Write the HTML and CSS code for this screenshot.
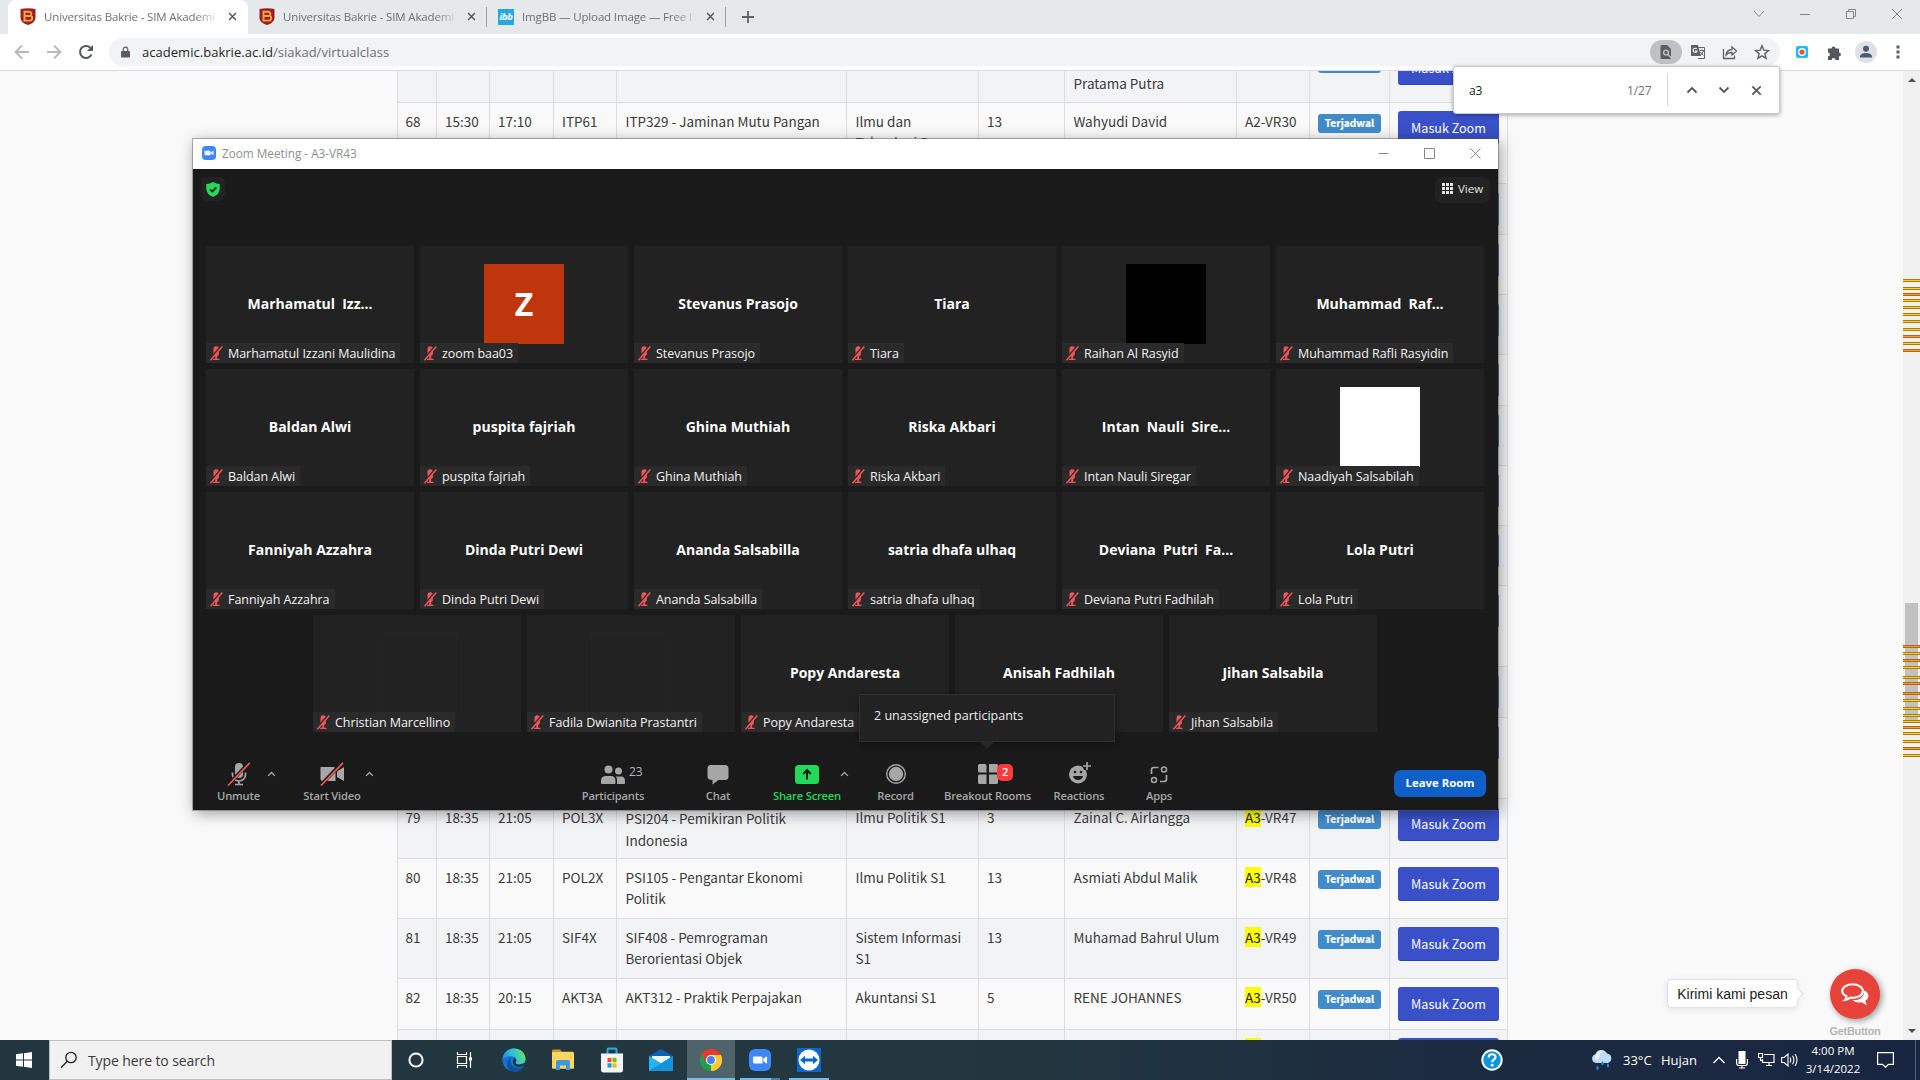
FILE: index.html
```html
<!DOCTYPE html>
<html lang="id">
<head>
<meta charset="utf-8">
<title>Universitas Bakrie - SIM Akademik</title>
<link rel="stylesheet" href="styles.css">
</head>
<body>
<svg class="defs" width="0" height="0" aria-hidden="true">
  <symbol id="crest" viewBox="0 0 16 17"><path d="M.5 1Q8-.6 15.500 1v9q0 4.500-7.500 7Q.5 14.500.5 10z" fill="#9b1f24"/><path d="M4.500 3.700h5a2.200 2.200 0 0 1 .9 4 2.500 2.500 0 0 1-.5 4.900H4.500zM3.500 3.700h3M3.500 12.600h3M5 8h5.500" fill="none" stroke="#f2a93b" stroke-width="1.900"/></symbol>
  <symbol id="close" viewBox="0 0 10 10"><path d="M1.200 1.200l7.600 7.600M8.800 1.200L1.200 8.800" fill="none" stroke="currentColor" stroke-width="1.600"/></symbol>
  <symbol id="thinclose" viewBox="0 0 11 11"><path d="M.5.5l10 10M10.500.5l-10 10" fill="none" stroke="currentColor"/></symbol>
  <symbol id="up" viewBox="0 0 12 8"><path d="M1.500 6.500L6 2l4.500 4.500" fill="none" stroke="currentColor" stroke-width="1.800"/></symbol>
  <symbol id="down" viewBox="0 0 12 8"><path d="M1.500 1.500L6 6l4.500-4.500" fill="none" stroke="currentColor" stroke-width="1.800"/></symbol>
  <symbol id="muted" viewBox="0 0 14 15"><path d="M4.500 3a2.700 2.700 0 0 1 5.400 0v4.500a2.700 2.700 0 0 1-5.400 0zM6.200 9.500h2v3.300h2.300V14H4v-1.200h2.200z" fill="#f0555a"/><path d="M12 .8L.7 13.500" stroke="#2a2a2a" stroke-width="2.200"/><path d="M13.300.6L1.500 14.200" stroke="#f0555a" stroke-width="1.500"/></symbol>
  <symbol id="zoomlogo" viewBox="0 0 22 22"><rect width="22" height="22" rx="6" fill="#4087fc"/><path d="M4 7.500h8q1.500 0 1.500 1.500v5.500h-8Q4 14.500 4 13zM14.300 9.700L18 7.300v7.400l-3.700-2.400z" fill="#fff"/></symbol>
</svg>

<div class="screen">
  <header class="tabs">
    <div class="tab active"><svg class="fav"><use href="#crest"/></svg><span class="title">Universitas Bakrie - SIM Akademi</span><svg class="x"><use href="#close"/></svg></div>
    <div class="tab"><svg class="fav"><use href="#crest"/></svg><span class="title">Universitas Bakrie - SIM Akademi</span><svg class="x"><use href="#close"/></svg></div>
    <div class="tab"><span class="ibb">ibb</span><span class="title">ImgBB — Upload Image — Free I</span><svg class="x"><use href="#close"/></svg></div>
    <svg class="plus" viewBox="0 0 12 12"><path d="M6 0v12M0 6h12" stroke="#5f6368" stroke-width="1.800"/></svg>
    <div class="wincontrols">
      <svg viewBox="0 0 12 12"><path d="M1 3l5 5.500L11 3" fill="none" stroke="#85898c"/></svg>
      <svg viewBox="0 0 12 12"><path d="M1 6.500h10" stroke="#85898c"/></svg>
      <svg viewBox="0 0 12 12"><path d="M1.500 3.500h7v7h-7zM3.500 3.500v-2h7v7h-2" fill="none" stroke="#85898c"/></svg>
      <svg viewBox="0 0 12 12"><path d="M1 1l10 10M11 1L1 11" stroke="#85898c"/></svg>
    </div>
  </header>

  <div class="toolbar">
    <div class="nav">
      <svg viewBox="0 0 16 16"><path d="M15 8H2M8 1.500L1.500 8 8 14.500" fill="none" stroke="#b6b8ba" stroke-width="1.800"/></svg>
      <svg viewBox="0 0 16 16"><path d="M1 8h13M8 1.500L14.500 8 8 14.500" fill="none" stroke="#b6b8ba" stroke-width="1.800"/></svg>
      <svg viewBox="0 0 16 16"><path d="M13.500 10.500A6 6 0 1 1 12.300 3.700L14 5.500" fill="none" stroke="#54585c" stroke-width="2"/><path d="M15 1v6H9z" fill="#54585c"/></svg>
    </div>
    <div class="omnibox">
      <svg class="lock" viewBox="0 0 10 12"><path d="M1 4.800h8q1 0 1 1V11q0 1-1 1H1q-1 0-1-1V5.800q0-1 1-1z" fill="#5a5e63"/><path d="M2.500 5V3a2.500 2.400 0 0 1 5 0v2" fill="none" stroke="#5a5e63" stroke-width="1.300"/></svg>
      <span class="url"><b>academic.bakrie.ac.id</b>/siakad/virtualclass</span>
      <div class="omni-icons">
        <span class="pill"><svg viewBox="0 0 16 16"><path d="M4 1h5l4 4v9q0 1-1 1H4q-1.500 0-1.500-1.500v-11Q2.500 1 4 1z" fill="#5a5d61"/><circle cx="8" cy="8.500" r="2.400" fill="none" stroke="#c0c1c4" stroke-width="1.400"/><path d="M9.600 10.200l3.600 3.600" stroke="#c0c1c4" stroke-width="1.400"/></svg></span>
        <svg viewBox="0 0 16 16"><path d="M1 1h7l3 11H1z" fill="#5f6368"/><path d="M8.700 3.500h5.800v11H8M10 6.500h4M12 5.500v1M13.500 7q-1 3-3.500 4.500M10.500 8l3 3.500" fill="none" stroke="#5f6368"/><path d="M6.700 5A2 2 0 1 0 7 7H5" fill="none" stroke="#f1f3f4" stroke-width="1.100"/></svg>
        <svg viewBox="0 0 16 16"><path d="M1.500 5v9.500h11v-3M4 11q.5-5 6-5.500V3l4.500 4-4.500 4V8.500Q6 8.500 4 11z" fill="none" stroke="#5f6368" stroke-width="1.300"/></svg>
        <svg viewBox="0 0 16 16"><path d="M8 1.700l1.800 4.400 4.700.4-3.600 3.100 1.100 4.600L8 11.800l-4 2.400 1.100-4.600L1.500 6.500l4.700-.4z" fill="none" stroke="#5f6368" stroke-width="1.400"/></svg>
      </div>
    </div>
    <div class="ext">
      <svg width="12" height="12" viewBox="0 0 12 12"><rect width="12" height="12" rx="2" fill="#18bdfb"/><circle cx="6" cy="6" r="3.900" fill="#fff"/><circle cx="6" cy="6" r="2.600" fill="#f4512c"/></svg>
      <svg width="15" height="15" viewBox="0 0 15 15"><path d="M1 3.500h3.500a2 2 0 1 1 4 0H12v4a1.900 1.900 0 1 1 0 3.800V15H8.400a1.900 1.900 0 0 0-3.800 0H1v-3.700a1.900 1.900 0 0 0 0-3.800z" fill="#54585c"/></svg>
      <svg width="22" height="22" viewBox="0 0 22 22"><circle cx="11" cy="11" r="11" fill="#dee1e6"/><circle cx="11" cy="7.800" r="3" fill="#4d5b73"/><path d="M5 16.500v-1.500q1-3 6-3t6 3v1.500z" fill="#4d5b73"/></svg>
      <svg width="4" height="14" viewBox="0 0 4 14"><path d="M.5.500h3v3h-3zM.5 5.500h3v3h-3zM.5 10.500h3v3h-3z" fill="#5a5e63"/></svg>
    </div>
  </div>

  <main class="page">
    <div class="content">
      <table class="classes">
        <colgroup><col class="c-no"><col class="c-start"><col class="c-end"><col class="c-code"><col class="c-course"><col class="c-prog"><col class="c-count"><col class="c-lect"><col class="c-room"><col class="c-stat"><col class="c-act"></colgroup>
        <tbody>
        <tr class="h60"><td></td><td></td><td></td><td></td><td></td><td></td><td></td><td class="low"><br>Pratama Putra</td><td></td><td><span class="badge">Terjadwal</span></td><td><a class="btn">Masuk Zoom</a></td></tr>
        <tr class="h81"><td>68</td><td>15:30</td><td>17:10</td><td>ITP61</td><td>ITP329 - Jaminan Mutu Pangan</td><td>Ilmu dan<br>Teknologi Pangan<br>S1</td><td>13</td><td>Wahyudi David</td><td>A2-VR30</td><td><span class="badge">Terjadwal</span></td><td><a class="btn">Masuk Zoom</a></td></tr>
        <tr class="h51"><td colspan="10"></td><td><a class="btn">Masuk Zoom</a></td></tr>
        <tr class="h60"><td colspan="10"></td><td><a class="btn">Masuk Zoom</a></td></tr>
        <tr class="h60"><td colspan="10"></td><td><a class="btn">Masuk Zoom</a></td></tr>
        <tr class="h51"><td colspan="10"></td><td><a class="btn">Masuk Zoom</a></td></tr>
        <tr class="h60"><td colspan="10"></td><td><a class="btn">Masuk Zoom</a></td></tr>
        <tr class="h60"><td colspan="10"></td><td><a class="btn">Masuk Zoom</a></td></tr>
        <tr class="h60"><td colspan="10"></td><td><a class="btn">Masuk Zoom</a></td></tr>
        <tr class="h81"><td colspan="10"></td><td><a class="btn">Masuk Zoom</a></td></tr>
        <tr class="h51"><td colspan="10"></td><td><a class="btn">Masuk Zoom</a></td></tr>
        <tr class="h81"><td colspan="10"></td><td><a class="btn">Masuk Zoom</a></td></tr>
        <tr class="h60"><td>79</td><td>18:35</td><td>21:05</td><td>POL3X</td><td class="loose">PSI204 - Pemikiran Politik<br>Indonesia</td><td>Ilmu Politik S1</td><td>3</td><td>Zainal C. Airlangga</td><td><mark>A3</mark>-VR47</td><td><span class="badge">Terjadwal</span></td><td><a class="btn">Masuk Zoom</a></td></tr>
        <tr class="h60"><td>80</td><td>18:35</td><td>21:05</td><td>POL2X</td><td>PSI105 - Pengantar Ekonomi<br>Politik</td><td>Ilmu Politik S1</td><td>13</td><td>Asmiati Abdul Malik</td><td><mark>A3</mark>-VR48</td><td><span class="badge">Terjadwal</span></td><td><a class="btn">Masuk Zoom</a></td></tr>
        <tr class="h60"><td>81</td><td>18:35</td><td>21:05</td><td>SIF4X</td><td>SIF408 - Pemrograman<br>Berorientasi Objek</td><td>Sistem Informasi<br>S1</td><td>13</td><td>Muhamad Bahrul Ulum</td><td><mark>A3</mark>-VR49</td><td><span class="badge">Terjadwal</span></td><td><a class="btn">Masuk Zoom</a></td></tr>
        <tr class="h51"><td>82</td><td>18:35</td><td>20:15</td><td>AKT3A</td><td>AKT312 - Praktik Perpajakan</td><td>Akuntansi S1</td><td>5</td><td>RENE JOHANNES</td><td><mark>A3</mark>-VR50</td><td><span class="badge">Terjadwal</span></td><td><a class="btn">Masuk Zoom</a></td></tr>
        <tr class="h51"><td></td><td></td><td></td><td></td><td></td><td></td><td></td><td></td><td><mark>A3</mark></td><td></td><td><a class="btn">Masuk Zoom</a></td></tr>
        </tbody>
      </table>
    </div>
    <div class="scrollbar">
      <svg viewBox="0 0 10 5"><path d="M0 5l5-5 5 5z" fill="#505050"/></svg>
      <div class="thumb"></div>
      <svg viewBox="0 0 10 5"><path d="M0 0l5 5 5-5z" fill="#505050"/></svg>
      <i style="top:208px"></i><i style="top:216px"></i><i class="o" style="top:222px"></i><i style="top:228px"></i><i style="top:235px"></i><i style="top:242px"></i><i style="top:249px"></i><i style="top:257px"></i><i class="o" style="top:264px"></i><i style="top:271px"></i><i class="o" style="top:278px"></i>
      <i class="o" style="top:574px"></i><i style="top:581px"></i><i class="o" style="top:588px"></i><i style="top:595px"></i><i style="top:605px"></i><i class="o" style="top:611px"></i><i class="o" style="top:621px"></i><i style="top:628px"></i><i style="top:636px"></i><i style="top:643px"></i><i style="top:649px"></i><i class="o" style="top:655px"></i><i style="top:661px"></i><i style="top:669px"></i><i class="o" style="top:676px"></i><i style="top:683px"></i>
    </div>
    <div class="chatwidget">
      <span class="bubble">Kirimi kami pesan</span>
      <div class="fabcol">
        <span class="fab"><svg viewBox="0 0 28 23"><path d="M23.500 7.200Q28 10 27.300 14q-.6 2.500-3 4 .4 2.500 2 3.900-3.300-.2-5.300-2.600-6 1-9.500-2.100 11.500.3 12-10z" fill="#fff"/><path d="M11.500 1.300c6 0 10.400 3 10.400 6.800s-4.400 6.800-10.400 6.800l-2.500-.2q-2.300 2-5 2.200 1.600-1.500 1.500-3.700Q1.200 11.200 1.200 8.100c0-3.800 4.400-6.800 10.300-6.800z" fill="#e8433a" stroke="#fff" stroke-width="2.100"/></svg></span>
        <span class="gb">GetButton</span>
      </div>
    </div>
  </main>

  <footer class="taskbar">
    <div class="start"><svg width="16" height="16" viewBox="0 0 16 16"><path d="M0 2.300L7 1.300v6.300H0zM8 1.200L16 0v7.600H8zM0 8.500h7v6.300l-7-1zM8 8.500h8V16l-8-1.200z" fill="#fff"/></svg></div>
    <div class="search"><svg width="18" height="18" viewBox="0 0 18 18"><circle cx="11" cy="6.500" r="5.200" fill="none" stroke="#222" stroke-width="1.300"/><path d="M7.300 10.300L1 16.700" stroke="#222" stroke-width="1.300"/></svg><span>Type here to search</span></div>
    <div class="apps">
      <span><svg width="18" height="18" viewBox="0 0 18 18"><circle cx="9" cy="9" r="6.600" fill="none" stroke="#fff" stroke-width="2"/></svg></span>
      <span><svg width="18" height="18" viewBox="0 0 18 18"><path d="M1.500 5.500h9v7h-9zM1.500 1v2.500h9V1M1.500 17v-2.500h9V17M14.500 1v16" fill="none" stroke="#fff" stroke-width="1.200"/><path d="M13 6.500h3v3h-3z" fill="#fff"/></svg></span>
      <span><svg width="24" height="24" viewBox="0 0 24 24"><defs><linearGradient id="eg" x1="0" x2="1" y1=".6" y2=".3"><stop stop-color="#1c8fd8"/><stop offset=".5" stop-color="#2fc1d8"/><stop offset="1" stop-color="#6be457"/></linearGradient></defs><circle cx="12" cy="12" r="11.500" fill="#1474cf"/><path d="M.6 11C1.200 4.500 6 .5 12 .5c7 0 11.500 5 11.500 10 0 4-3 6-6.500 6-2.500 0-3.600-1-3.200-2 1.600-2 .4-6.300-4-6.300C5.600 8.200 2 9.400.6 11z" fill="url(#eg)"/><path d="M9 23C4 20 3.500 13 9 9.500 7.200 13 9 19.500 15 20q4 .3 7-2.500Q18 24 9 23z" fill="#0f4f9b"/><path d="M13.800 14.500c-.4 1 .7 2 3.200 2q3 0 5-1.400l2-.1v3l-2.500-.5q-2 1.500-4.500 1.500-5.500 0-6-4.900-.2-2.500 1.700-4.500 2.100 2 1.100 4.900z" fill="#21363f"/></svg></span>
      <span><svg width="22" height="22" viewBox="0 0 22 20" preserveAspectRatio="none"><path d="M0 2q0-1.500 1.500-1.500H8l2 2H0z" fill="#d99a1b"/><path d="M0 2.500h20.500q1.500 0 1.500 1.500v13q0 1-1 1H1q-1 0-1-1z" fill="#fcd462"/><path d="M4 18v-6q0-2 2-2h10q2 0 2 2v7h-4v-4H8v4H4z" fill="#3f97dc"/></svg></span>
      <span><svg width="24" height="26" viewBox="0 0 24 24" preserveAspectRatio="none"><path d="M7.500 7V2.500q0-1 1-1h7q1 0 1 1V7" fill="none" stroke="#29a8e8" stroke-width="2"/><path d="M1 6h22v15q0 2.500-2.500 2.500h-17Q1 23.500 1 21z" fill="#f4f4f4"/><path fill="#f25022" d="M7.500 10h4v4h-4z"/><path fill="#7fba00" d="M12.500 10h4v4h-4z"/><path fill="#00a4ef" d="M7.500 15h4v4h-4z"/><path fill="#ffb900" d="M12.500 15h4v4h-4z"/></svg></span>
      <span><svg width="24" height="22" viewBox="0 0 24 22"><path d="M0 7L12 0l12 7v6H0z" fill="#0b62b5"/><path d="M3 7h18v8H3z" fill="#f4f4f4"/><path d="M0 7l12 7L24 7v15H0z" fill="#28b3ee"/><path d="M0 22L24 7v15z" fill="#1592dc"/><path d="M3 7h18l-9 7z" fill="#f4f4f4"/></svg></span>
      <span class="run current"><svg width="22" height="22" viewBox="0 0 24 24"><path d="M12 12L1.600 6A12 12 0 0 1 22.400 6z" fill="#e33b2e"/><path d="M12 12v12A12 12 0 0 1 1.600 6z" fill="#1fa04b"/><path d="M12 12L22.400 6A12 12 0 0 1 12 24z" fill="#fccb2f"/><path d="M12 6.500h10.700A12 12 0 0 0 1.600 6l5.600 9z" fill="#e33b2e"/><path d="M16.800 14.700L12 24A12 12 0 0 0 22.700 6.500H12z" fill="#fccb2f"/><circle cx="12" cy="12" r="5.500" fill="#fff"/><circle cx="12" cy="12" r="4.300" fill="#4384f3"/></svg></span>
      <span class="run multi"><svg width="22" height="22" viewBox="0 0 22 22"><use href="#zoomlogo"/></svg></span>
      <span class="run"><svg width="24" height="24" viewBox="0 0 24 24"><path fill="#0c68d0" d="M0 0h24v24H0z"/><circle cx="12" cy="12" r="10.500" fill="#fff"/><path d="M3 12l5-4.200v2.800h8V7.800l5 4.200-5 4.200v-2.800H8v2.800z" fill="#0c68c8"/></svg></span>
    </div>
    <svg class="help" width="22" height="22" viewBox="0 0 22 22"><circle cx="11" cy="11" r="9.700" fill="#0d95dd" stroke="#fff" stroke-width="2"/><path d="M7.700 8.500q0-3.200 3.400-3.200t3.400 2.800q0 1.500-1.700 2.500-1.600 1-1.600 2.600" fill="none" stroke="#fff" stroke-width="2.100"/><circle cx="11.200" cy="16.200" r="1.400" fill="#fff"/></svg>
    <div class="tray">
      <svg class="weather" width="22" height="22" viewBox="0 0 22 22"><path d="M5 14a4.500 4.500 0 0 1-.6-8.800A6.300 6.300 0 0 1 16 4.500a4.900 4.900 0 0 1 1 9.500z" fill="#bcdcf4"/><path d="M5 11a4 4 0 0 1 .5-6A6 6 0 0 1 13 2q-5 2-5 8z" fill="#e5f2fc"/><path d="M6.500 16.500q2.500 3.500 0 4.500-2.500-1 0-4.500zM11.500 12q2.500 3.500 0 4.500-2.500-1 0-4.500zM17 14q2.500 3.500 0 4.500-2.500-1 0-4.500z" fill="#2388e0"/></svg>
      <span class="temp">33°C</span><span class="rain">Hujan</span>
      <svg class="tchev" width="12" height="8" viewBox="0 0 12 8"><path d="M.5 7L6 1.500 11.500 7" fill="none" stroke="#fff" stroke-width="1.300"/></svg>
      <svg class="tmic" width="12" height="18" viewBox="0 0 12 18"><path d="M2.500 0h7v13h-7z" fill="#fff"/><path d="M.6 8v4q0 2.500 2.500 2.500h5.800q2.500 0 2.500-2.500V8M6 14.500V17M3 17h6" fill="none" stroke="#fff" stroke-width="1.200"/></svg>
      <svg class="tnet" width="17" height="14" viewBox="0 0 17 14"><path d="M6 1.500h10v8H4.500V6M8 12.500h6M11 9.500v3M.5.500h4v4h-4zM2.500 4.500v3h2" fill="none" stroke="#fff" stroke-width="1.200"/></svg>
      <svg class="tvol" width="17" height="14" viewBox="0 0 17 14"><path d="M.6 4.500h2.500L7 1v12L3.100 9.500H.6zM9 4.500q1.500 2.500 0 5M11.500 2.700q2.800 4.300 0 8.600M14 1q4 6 0 12" fill="none" stroke="#fff" stroke-width="1.100"/></svg>
      <div class="clock"><span>4:00 PM</span><span>3/14/2022</span></div>
      <svg class="tnote" width="17" height="16" viewBox="0 0 17 16"><path d="M.6.600h15.800v11.800h-4.900L8.500 15.300 5.500 12.400H.6z" fill="none" stroke="#fff" stroke-width="1.200"/></svg>
    </div>
  </footer>

  <section class="zoomwin">
    <div class="ztitle"><svg width="14" height="14"><use href="#zoomlogo"/></svg><span>Zoom Meeting - A3-VR43</span>
      <div class="zctl"><svg viewBox="0 0 11 11"><path d="M.5 5.500h10" stroke="#888"/></svg><svg viewBox="0 0 11 11"><path d="M.5.5h10v10H.5z" fill="none" stroke="#888"/></svg><svg viewBox="0 0 11 11" color="#888"><use href="#thinclose"/></svg></div>
    </div>
    <div class="zhead">
      <span class="shield"><svg width="14" height="15" viewBox="0 0 14 15"><path d="M7 0q3 2 6.700 2v5q0 5-6.700 8Q.3 12 .3 7V2Q4 2 7 0z" fill="#23d959"/><path d="M4 7.300l2.300 2.300L10.300 5.300" fill="none" stroke="#1a1a1a" stroke-width="1.700"/></svg></span>
      <span class="view"><svg width="11" height="11" viewBox="0 0 11 11"><path d="M0 0h3v3H0zM4 0h3v3H4zM8 0h3v3H8zM0 4h3v3H0zM4 4h3v3H4zM8 4h3v3H8zM0 8h3v3H0zM4 8h3v3H4zM8 8h3v3H8z" fill="#e4e4e4"/></svg>View</span>
    </div>
    <div class="gallery">
      <div class="grow">
        <div class="tile"><b>Marhamatul&nbsp; Izz...</b><span class="nm"><svg><use href="#muted"/></svg>Marhamatul Izzani Maulidina</span></div>
        <div class="tile"><div class="ava z">Z</div><span class="nm"><svg><use href="#muted"/></svg>zoom baa03</span></div>
        <div class="tile"><b>Stevanus Prasojo</b><span class="nm"><svg><use href="#muted"/></svg>Stevanus Prasojo</span></div>
        <div class="tile"><b>Tiara</b><span class="nm"><svg><use href="#muted"/></svg>Tiara</span></div>
        <div class="tile"><div class="ava black"></div><span class="nm"><svg><use href="#muted"/></svg>Raihan Al Rasyid</span></div>
        <div class="tile"><b>Muhammad&nbsp; Raf...</b><span class="nm"><svg><use href="#muted"/></svg>Muhammad Rafli Rasyidin</span></div>
      </div>
      <div class="grow">
        <div class="tile"><b>Baldan Alwi</b><span class="nm"><svg><use href="#muted"/></svg>Baldan Alwi</span></div>
        <div class="tile"><b>puspita fajriah</b><span class="nm"><svg><use href="#muted"/></svg>puspita fajriah</span></div>
        <div class="tile"><b>Ghina Muthiah</b><span class="nm"><svg><use href="#muted"/></svg>Ghina Muthiah</span></div>
        <div class="tile"><b>Riska Akbari</b><span class="nm"><svg><use href="#muted"/></svg>Riska Akbari</span></div>
        <div class="tile"><b>Intan&nbsp; Nauli&nbsp; Sire...</b><span class="nm"><svg><use href="#muted"/></svg>Intan Nauli Siregar</span></div>
        <div class="tile"><div class="ava white"></div><span class="nm"><svg><use href="#muted"/></svg>Naadiyah Salsabilah</span></div>
      </div>
      <div class="grow">
        <div class="tile"><b>Fanniyah Azzahra</b><span class="nm"><svg><use href="#muted"/></svg>Fanniyah Azzahra</span></div>
        <div class="tile"><b>Dinda Putri Dewi</b><span class="nm"><svg><use href="#muted"/></svg>Dinda Putri Dewi</span></div>
        <div class="tile"><b>Ananda Salsabilla</b><span class="nm"><svg><use href="#muted"/></svg>Ananda Salsabilla</span></div>
        <div class="tile"><b>satria dhafa ulhaq</b><span class="nm"><svg><use href="#muted"/></svg>satria dhafa ulhaq</span></div>
        <div class="tile"><b>Deviana&nbsp; Putri&nbsp; Fa...</b><span class="nm"><svg><use href="#muted"/></svg>Deviana Putri Fadhilah</span></div>
        <div class="tile"><b>Lola Putri</b><span class="nm"><svg><use href="#muted"/></svg>Lola Putri</span></div>
      </div>
      <div class="grow">
        <div class="tile"><div class="ava dark"></div><span class="nm"><svg><use href="#muted"/></svg>Christian Marcellino</span></div>
        <div class="tile"><div class="ava dark"></div><span class="nm"><svg><use href="#muted"/></svg>Fadila Dwianita Prastantri</span></div>
        <div class="tile"><b>Popy Andaresta</b><span class="nm"><svg><use href="#muted"/></svg>Popy Andaresta</span></div>
        <div class="tile"><b>Anisah Fadhilah</b></div>
        <div class="tile"><b>Jihan Salsabila</b><span class="nm"><svg><use href="#muted"/></svg>Jihan Salsabila</span></div>
      </div>
    </div>
    <div class="ztools">
      <div class="tool t-mute"><svg width="24" height="24" viewBox="0 0 24 24"><path d="M8 5a4 4 0 0 1 8 0v7a4 4 0 0 1-8 0z" fill="#a6a6a6"/><path d="M5.500 10.500v2a6.500 6.500 0 0 0 13 0v-2M12 19v3.500M8 22.500h8" fill="none" stroke="#a6a6a6" stroke-width="1.700"/><path d="M22 .8L.8 23.200" stroke="#1a1a1a" stroke-width="3.500"/><path d="M22.800.8L1 23.500" stroke="#fa5155" stroke-width="1.700"/></svg><span>Unmute</span></div>
      <svg class="chev c1"><use href="#up"/></svg>
      <div class="tool t-video"><svg width="26" height="24" viewBox="0 0 26 24"><path d="M2 5h12.500q2 0 2 2v12H4q-2.500 0-2.500-2.500V5zM18 9.500L25 5v14l-7-4z" fill="#a6a6a6"/><path d="M23 .8L1.800 23.200" stroke="#1a1a1a" stroke-width="3.500"/><path d="M24 .8L2 23.500" stroke="#fa5155" stroke-width="1.700"/></svg><span>Start Video</span></div>
      <svg class="chev c2"><use href="#up"/></svg>
      <div class="tool t-part"><svg width="24" height="24" viewBox="0 0 24 24"><circle cx="7.500" cy="7.500" r="4" fill="#a6a6a6"/><circle cx="17.500" cy="9" r="3.500" fill="#a6a6a6"/><path d="M0 21v-2q0-5 5-5h5q4.500 0 4.500 5v2q0 1-1 1H1q-1 0-1-1zM16 22v-4q0-2-1-3.500h5q4 0 4 4.500v2q0 1-1 1z" fill="#a6a6a6"/></svg><em>23</em><span>Participants</span></div>
      <div class="tool t-chat"><svg width="22" height="24" viewBox="0 0 22 24"><path d="M4 3h14q3.500 0 3.500 3.500v8q0 3.500-3.500 3.500h-6.500l-6 4.500V18Q.5 18 .5 14.500v-8Q.5 3 4 3z" fill="#a6a6a6"/></svg><span>Chat</span></div>
      <div class="tool t-share"><svg width="24" height="24" viewBox="0 0 24 24"><rect y="3" width="24" height="19" rx="3.500" fill="#23d959"/><path d="M12 17.500V8.500M8.300 12L12 8l3.700 4" fill="none" stroke="#1a1a1a" stroke-width="2"/></svg><span>Share Screen</span></div>
      <svg class="chev c3"><use href="#up"/></svg>
      <div class="tool t-rec"><svg width="22" height="24" viewBox="0 0 22 24"><circle cx="11" cy="12" r="9.300" fill="none" stroke="#a6a6a6" stroke-width="1.400"/><circle cx="11" cy="12" r="7.200" fill="#a6a6a6"/></svg><span>Record</span></div>
      <div class="tool t-break"><svg width="22" height="24" viewBox="0 0 22 24"><path d="M2.500 2H8q1.500 0 1.500 1.500v7h-7Q1 10.500 1 9V3.500Q1 2 2.500 2zM12 2h7.500Q21 2 21 3.500V9q0 1.500-1.500 1.500H12zM1 14q0-1.500 1.500-1.500h7V22h-7Q1 22 1 20.500zM12 12.500h7.500Q21 12.500 21 14v6.500q0 1.500-1.500 1.500H12z" fill="#a6a6a6"/></svg><i>2</i><span>Breakout Rooms</span></div>
      <div class="tool t-react"><svg width="24" height="24" viewBox="0 0 24 24"><circle cx="11" cy="12.500" r="9" fill="#a6a6a6"/><circle cx="20" cy="4" r="4.500" fill="#1a1a1a"/><path d="M20 0v8M16 4h8" stroke="#a6a6a6" stroke-width="1.700"/><path d="M6 14h10q-.8 4-5 4t-5-4z" fill="#1a1a1a"/><circle cx="8" cy="10" r="1.300" fill="#1a1a1a"/><circle cx="14" cy="10" r="1.300" fill="#1a1a1a"/></svg><span>Reactions</span></div>
      <div class="tool t-apps"><svg width="20" height="24" viewBox="0 0 20 24"><path d="M2.500 12V8q0-2.500 2.500-2.500h4.500M17.500 13v4q0 2.500-2.500 2.500h-4" fill="none" stroke="#a6a6a6" stroke-width="1.700"/><circle cx="15" cy="7.500" r="2.500" fill="none" stroke="#a6a6a6" stroke-width="1.500"/><circle cx="5" cy="18" r="2.500" fill="none" stroke="#a6a6a6" stroke-width="1.500"/></svg><span>Apps</span></div>
      <button class="leave">Leave Room</button>
    </div>
    <div class="tooltip">2 unassigned participants</div>
  </section>

  <div class="findbar"><span class="q">a3</span><span class="n">1/27</span><span class="sep"></span><svg class="f1"><use href="#up"/></svg><svg class="f2"><use href="#down"/></svg><svg class="f3"><use href="#close"/></svg></div>
</div>
</body>
</html>
```
FILE: styles.css
```css
* { box-sizing: border-box; }
body { margin: 0; font-family: "Open Sans", "Noto Sans", sans-serif; overflow: hidden; }
svg { display: block; flex: none; }
.defs { position: absolute; }
.screen { position: relative; width: 1920px; height: 1080px; display: flex; flex-direction: column; overflow: hidden; background: #f9f9f9; }

/* browser tabs */
.tabs { height: 34px; flex: none; display: flex; background: #e5e9ec; padding-left: 8px; }
.tab { width: 239px; height: 34px; display: flex; align-items: center; padding: 0 11px 1px 12px; color: #6c7074; font-size: 11.5px; }
.tab + .tab { border-right: 1px solid #9da1a5; height: 20px; margin-top: 7px; padding: 0 10px 1px 11px; }
.tab.active { background: #fff; border-radius: 8px 8px 0 0; width: 240px; }
.fav { width: 16px; height: 17px; margin-right: 8px; }
.ibb { width: 16px; height: 16px; margin-right: 8px; background: #25a9e0; color: #fff; font: italic bold 9.5px/16px "Open Sans", sans-serif; text-align: center; letter-spacing: -.3px; }
.title { flex: 1; overflow: hidden; white-space: nowrap; line-height: 18px; letter-spacing: -.15px; -webkit-mask-image: linear-gradient(90deg, #000 86%, transparent 100%); mask-image: linear-gradient(90deg, #000 86%, transparent 100%); }
.x { width: 9px; height: 9px; margin-left: 8px; color: #54585c; }
.plus { width: 12px; height: 12px; margin: 11px 0 0 16px; }
.wincontrols { margin-left: auto; display: flex; gap: 34px; padding: 8px 17px 0 0; }
.wincontrols svg { width: 12px; height: 12px; }

/* browser toolbar */
.toolbar { height: 37px; flex: none; background: #fff; border-bottom: 1px solid #d9dbde; display: flex; align-items: center; }
.nav { display: flex; gap: 16px; padding-left: 14px; width: 109px; }
.nav svg { width: 16px; height: 16px; }
.omnibox { width: 1671px; height: 28px; border-radius: 14px; background: #f1f3f4; display: flex; align-items: center; padding-left: 12px; }
.lock { width: 9px; height: 12px; margin-right: 12px; }
.url { font-size: 13px; color: #6c7074; letter-spacing: .03px; }
.url b { font-weight: 400; color: #26282b; }
.omni-icons { margin-left: auto; display: flex; align-items: center; gap: 16px; padding-right: 10px; }
.omni-icons svg { width: 16px; height: 16px; }
.pill { width: 32px; height: 24px; border-radius: 12px; background: #c0c1c4; display: grid; place-items: center; margin-right: -8px; }
.ext { flex: 1; display: flex; align-items: center; padding-left: 16px; }
.ext svg:nth-child(2) { margin-left: 19px; }
.ext svg:nth-child(3) { margin-left: 13px; }
.ext svg:nth-child(4) { margin-left: 19px; }

/* page */
.page { position: relative; height: 969px; flex: none; display: flex; overflow: hidden; background: #f9f9f9; }
.content { flex: 1; padding-left: 397px; }
.classes { margin-top: -29px; width: 1111px; table-layout: fixed; border-collapse: collapse; font: 13.5px/21.45px "Noto Sans CJK SC", "Noto Sans", sans-serif; color: #3a3a3c; }
.classes td { border: 1px solid #dcdde0; padding: 8px 0 0 8px; vertical-align: top; white-space: nowrap; }
.classes td:nth-child(n+5) { padding-left: 8.5px; }
.classes td:nth-child(9), .classes td:nth-child(10), .classes td:last-child { padding-left: 8px; }
.classes td:nth-child(7) { padding-left: 8px; }
.classes td:first-child { padding-left: 7.5px; }
.classes td.low { padding-top: 9px; }
.classes td.loose { line-height: 22px; }
.classes tr:nth-child(odd) { background: #f2f3f5; }
.classes tr:nth-child(even) { background: #f9f9f9; }
.h51 { height: 51px; } .h60 { height: 60px; } .h81 { height: 81px; }
.c-no { width: 39px; } .c-start { width: 53px; } .c-end { width: 64px; } .c-code { width: 63px; } .c-course { width: 230px; } .c-prog { width: 132px; } .c-count { width: 86px; } .c-lect { width: 172px; } .c-room { width: 73px; } .c-stat { width: 80px; } .c-act { width: 118px; }
.classes mark { background: #ff0; color: #222; }
.badge { display: block; width: 63px; height: 19px; margin-top: 3px; border-radius: 3px; background: #428bca; color: #fff; font-size: 10.2px; font-weight: 700; line-height: 18px; text-align: center; -webkit-text-stroke: .2px #fff; }
.btn { display: block; width: 101px; height: 34px; border-radius: 3px; background: #3a50c9; border-bottom: 1px solid #3244b4; color: #fff; font-size: 12.6px; font-weight: 400; line-height: 34px; text-align: center; }

.scrollbar { position: relative; width: 17px; background: #f0f0f0; display: flex; flex-direction: column; align-items: center; padding: 7px 0; }
.scrollbar svg { width: 8px; height: 4px; }
.scrollbar svg:last-of-type { margin-top: auto; }
.thumb { width: 13px; height: 117px; background: #c1c1c1; margin-top: 521px; }
.scrollbar i { position: absolute; left: 0; width: 17px; height: 3px; background: #ffd21e; border: solid #a97b0c; border-width: 1px 0; }
.scrollbar i.o { background: #f59a35; border-color: #b26610; }

.chatwidget { position: absolute; right: 38px; bottom: 2px; display: flex; align-items: flex-start; gap: 30px; font-family: "Liberation Sans", sans-serif; }
.bubble { position: relative; margin-top: 10px; width: 131px; height: 29px; border: 1px solid #e2e2e2; border-radius: 5px; background: #fff; box-shadow: 0 1px 6px rgba(0,0,0,.1); font-size: 14px; line-height: 28px; text-align: center; color: #222; }
.bubble::after { content: ""; position: absolute; right: -5px; top: 9px; width: 9px; height: 9px; background: #fff; transform: rotate(45deg); border: solid #e2e2e2; border-width: 1px 1px 0 0; }
.fabcol { display: flex; flex-direction: column; align-items: center; width: 54px; }
.fab { width: 50px; height: 50px; border-radius: 50%; background: #e8433a; box-shadow: 2px 2px 6px rgba(0,0,0,.4); display: grid; place-items: center; }
.fab svg { width: 28px; height: 23px; }
.gb { margin-top: 5px; font-size: 11px; font-weight: 700; line-height: 14px; color: #b5b5b5; letter-spacing: -.3px; }

/* find in page */
.findbar { position: absolute; left: 1453px; top: 66px; width: 327px; height: 48px; display: flex; align-items: center; background: #fff; border: 1px solid #c9c9c9; border-radius: 3px; box-shadow: 0 1px 4px rgba(0,0,0,.35); padding: 0 0 0 15px; font-size: 12px; letter-spacing: -.1px; color: #222; }
.findbar .q { flex: none; width: 158px; }
.findbar .n { flex: none; width: 40px; color: #6c7074; }
.findbar .sep { flex: none; width: 1px; height: 32px; background: #d5d7da; margin-right: 18px; }
.findbar svg { width: 12px; height: 8px; color: #54585c; margin-right: 20px; }
.findbar svg.f3 { width: 11px; height: 11px; margin-left: 1px; }

/* meeting window */
.zoomwin { position: absolute; left: 193px; top: 139px; width: 1305px; height: 671px; background: #1a1a1a; box-shadow: 0 0 0 1px rgba(90,90,90,.45), 2px 3px 14px rgba(0,0,0,.4); display: flex; flex-direction: column; }
.ztitle { height: 30px; flex: none; background: #fff; display: flex; align-items: center; padding: 0 0 2px 9px; color: #8e8e8e; font-size: 11.75px; }
.ztitle span { margin-left: 6px; }
.zctl { margin-left: auto; display: flex; gap: 35px; padding-right: 17px; }
.zctl svg { width: 11px; height: 11px; }
.zhead { height: 77px; flex: none; display: flex; justify-content: space-between; align-items: flex-start; padding: 8px 8px 0; }
.shield { width: 24px; height: 24px; border-radius: 6px; background: #222; display: grid; place-items: center; }
.view { width: 55px; height: 26px; border-radius: 7px; background: #222; color: #e4e4e4; font-size: 11.5px; display: flex; align-items: center; padding: 0 0 3px 7px; gap: 5px; }
.gallery { display: flex; flex-direction: column; gap: 6px; height: 486px; flex: none; }
.grow { display: flex; gap: 6px; justify-content: center; padding-right: 1px; }
.tile { position: relative; width: 208px; height: 117px; background: #222; display: flex; align-items: center; justify-content: center; color: #fff; }
.tile b { font-size: 14px; font-weight: 700; white-space: nowrap; margin-top: -2px; }
.ava { width: 80px; height: 80px; margin-top: -1px; font-size: 32px; font-weight: 700; line-height: 79px; text-align: center; }
.z { background: #bf360c; } .black { background: #000; } .white { background: #fff; } .dark { border: 1px solid #252525; }
.nm { position: absolute; left: 0; bottom: 0; height: 20px; padding-right: 5px; background: #2a2a2a; display: flex; align-items: center; font-size: 12.5px; letter-spacing: -.05px; white-space: nowrap; color: #f3f3f3; }
.nm svg { width: 14px; height: 15px; margin: 0 5px 0 3px; }

.ztools { flex: 1; display: flex; align-items: flex-start; padding-top: 30px; }
.tool { position: relative; display: flex; flex-direction: column; align-items: center; font-size: 11.2px; font-weight: 600; line-height: 16px; letter-spacing: -.2px; color: #a6a6a6; white-space: nowrap; flex: none; }
.tool span { margin-top: 2px; }
.t-mute { width: 45px; margin-left: 23px; }
.chev { width: 9px; height: 6px; margin-top: 9px; color: #a6a6a6; }
.c1 { margin-left: 6px; }
.t-video { width: 60px; margin-left: 26px; }
.c2 { margin-left: 3px; }
.t-part { width: 70px; margin-left: 204px; }
.t-part em { position: absolute; left: 51px; top: 2px; font-style: normal; font-weight: 400; font-size: 12px; color: #b5b5b5; }
.t-chat { width: 50px; margin-left: 45px; }
.t-share { width: 70px; margin-left: 29px; }
.t-share span { color: #23d959; }
.c3 { margin-left: -2px; }
.t-rec { width: 45px; margin-left: 24px; }
.t-break { width: 91px; margin-left: 24px; }
.t-break i { position: absolute; left: 55px; top: 2px; width: 16px; height: 17px; border-radius: 5px; background: #f93a3f; color: #fff; font-style: normal; font-size: 11px; text-align: center; }
.t-react { width: 60px; margin-left: 16px; }
.t-apps { width: 50px; margin-left: 25px; }
.leave { width: 92px; height: 27px; margin: 8px 12px 0 auto; padding: 0 0 2px; border: 0; border-radius: 7px; background: #0e5fc8; color: #fff; font: 700 11.4px "Open Sans", sans-serif; }
.tooltip { position: absolute; left: 666px; top: 555px; width: 256px; height: 48px; padding: 11px 0 0 14px; background: #222; border: 1px solid #303030; box-shadow: 0 2px 8px rgba(0,0,0,.4); color: #ededed; font-size: 12.5px; line-height: 20px; }
.tooltip::after { content: ""; position: absolute; left: 119px; top: 46px; border: solid transparent; border-width: 8px 8px 0; border-top-color: #272727; }

/* taskbar */
.taskbar { height: 40px; flex: none; display: flex; align-items: center; background: linear-gradient(90deg, #21363f 0, #22373f 50%, #1c2a40 78%, #192641 100%); color: #fff; }
.start { width: 49px; display: grid; place-items: center; padding-right: 2px; }
.search { width: 343px; height: 40px; background: #f1f1f1; border: 1px solid #bfbfbf; display: flex; align-items: center; padding-left: 10px; gap: 10px; color: #3b3b3b; font-size: 14px; letter-spacing: -.1px; }
.apps { display: flex; height: 40px; gap: 1.1px; }
.apps span { width: 48px; display: grid; place-items: center; }
.apps .run { position: relative; }
.apps .run::after { content: ""; position: absolute; left: 4px; right: 4px; bottom: 0; height: 2px; background: #76b9ed; }
.apps .current { background: #4f636b; }
.apps .current::after { left: 0; right: 0; }
.apps .multi::after { background: linear-gradient(90deg, #76b9ed 78%, #4e7d9f 78%); }
.help { margin-left: 648px; }
.tray { margin-left: auto; width: 330px; height: 40px; display: flex; align-items: center; font-size: 13px; border-right: 1px solid #56616f; margin-right: 4px; }
.temp { margin-left: 10px; width: 38px; }
.rain { width: 48px; }
.weather, .tchev, .tmic, .tnet, .tvol, .tnote { flex: none; }
.weather { margin-left: 5px; }
.tchev { margin-left: 4px; }
.tmic { margin-left: 11px; }
.tnet { margin-left: 10px; }
.tvol { margin-left: 6px; }
.clock { display: flex; flex-direction: column; align-items: center; width: 70px; font-size: 11.5px; line-height: 18px; }
.tnote { margin-left: 9px; }
```
